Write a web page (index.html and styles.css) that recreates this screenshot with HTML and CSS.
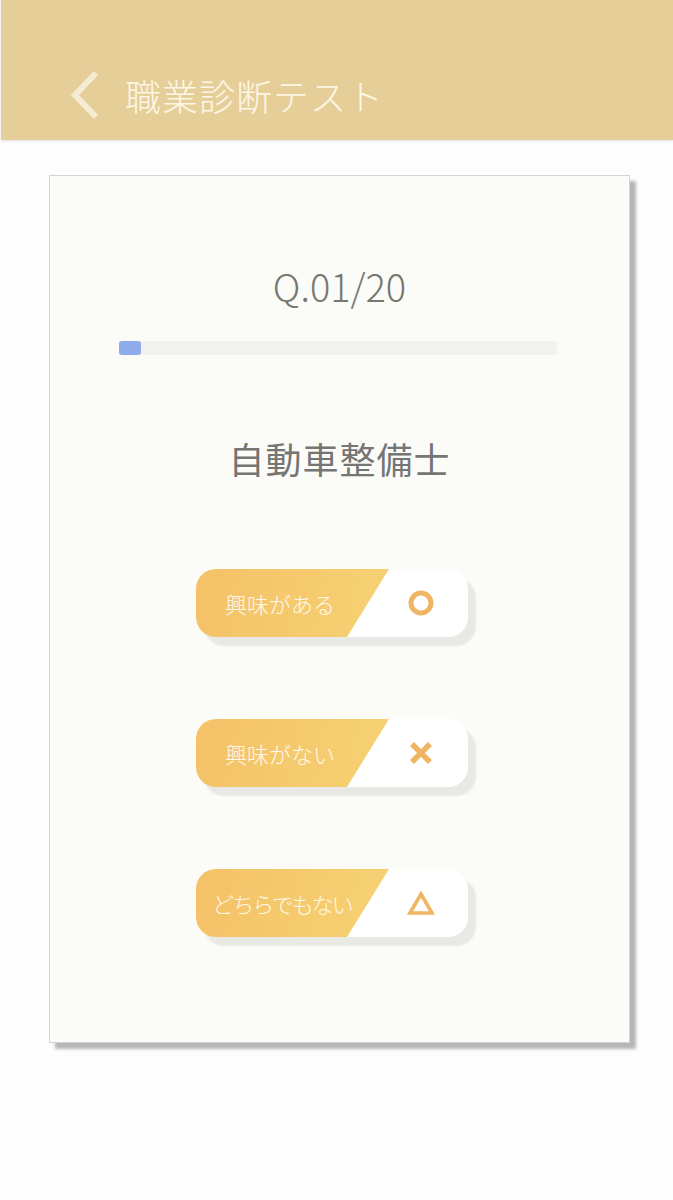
FILE: index.html
```
<!DOCTYPE html>
<html lang="ja">
<head>
<meta charset="utf-8">
<link rel="stylesheet" href="styles.css">
</head>
<body>
<header class="topbar">
  <svg class="back" width="34" height="50" viewBox="0 0 34 50"><path d="M28 3 L7 25 L28 47" fill="none" stroke="#f6ebd3" stroke-width="6"/></svg>
  <h1 class="title">職業診断テスト</h1>
</header>
<main class="card">
  <div class="qnum">Q.01/20</div>
  <div class="progress"><div class="fill" style="width:5%"></div></div>
  <h2 class="job">自動車整備士</h2>
  <div class="choices">
    <button class="choice">
      <span class="label">興味がある</span>
      <span class="icon"><svg width="28" height="28" viewBox="0 0 28 28"><circle cx="14" cy="14" r="10" fill="none" stroke="#f0b562" stroke-width="5"/></svg></span>
    </button>
    <button class="choice">
      <span class="label">興味がない</span>
      <span class="icon"><svg width="26" height="26" viewBox="0 0 26 26"><path d="M4 4 L22 22 M22 4 L4 22" fill="none" stroke="#f0b562" stroke-width="5.5"/></svg></span>
    </button>
    <button class="choice">
      <span class="label label-long">どちらでもない</span>
      <span class="icon"><svg width="28" height="26" viewBox="0 0 28 26"><path d="M14 4 L25 23 L3 23 Z" fill="none" stroke="#f0b562" stroke-width="3.6" stroke-linejoin="miter"/></svg></span>
    </button>
  </div>
</main>
</body>
</html>
```
FILE: styles.css
```
* { box-sizing: border-box; }
html, body { margin: 0; padding: 0; }
body {
  background: #fdfdfd;
  font-family: "Noto Sans CJK JP", "Noto Sans", sans-serif;
  width: 673px;
  height: 1200px;
  overflow: hidden;
}
.topbar {
  height: 140px;
  margin-left: 1px;
  background: #e5ce98;
  box-shadow: 0 1px 2px rgba(0,0,0,0.12);
  display: flex;
  align-items: center;
  padding: 50px 0 0 67px;
}
.back { display: block; flex: none; }
.title {
  margin: 0 0 0 23px;
  font-size: 36px;
  font-weight: 300;
  color: #fdf6e6;
  letter-spacing: 1px;
  line-height: 1;
}
.card {
  margin: 35px 0 0 49px;
  width: 581px;
  height: 868px;
  background: #fbfcf8;
  border: 1px solid #d4d4d0;
  box-shadow: 6px 6px 3px rgba(0,0,0,0.28);
  display: flex;
  flex-direction: column;
  align-items: center;
  padding-top: 84px;
}
.qnum {
  font-size: 38px;
  font-weight: 300;
  color: #78786f;
  line-height: 52px;
}
.progress {
  margin-top: 29px;
  width: 438px;
  height: 14px;
  background: #f2f3ef;
  border-radius: 2px;
  align-self: flex-start;
  margin-left: 69px;
}
.fill {
  height: 100%;
  background: #8eabeb;
  border-radius: 3px;
}
.job {
  margin: 78px 0 0 0;
  font-size: 36px;
  font-weight: 400;
  color: #757574;
  line-height: 50px;
  letter-spacing: 1px;
}
.choices {
  margin-top: 86px;
  display: flex;
  flex-direction: column;
  gap: 82px;
  align-self: flex-start;
  margin-left: 146px;
}
.choice {
  width: 272px;
  height: 68px;
  border: none;
  padding: 0;
  border-radius: 20px;
  overflow: hidden;
  background: #ffffff;
  box-shadow: 8px 9px 2px #e8e9e4;
  display: flex;
  align-items: stretch;
  font-family: inherit;
  cursor: pointer;
}
.label {
  width: 193px;
  flex: none;
  background: linear-gradient(100deg, #f4c167 0%, #f6d273 100%);
  clip-path: polygon(0 0, 100% 0, 151px 100%, 0 100%);
  display: flex;
  align-items: center;
  justify-content: center;
  padding-right: 25px;
  color: #fff8ea;
  font-size: 22px;
  font-weight: 300;
  white-space: nowrap;
}
.label-long {
  letter-spacing: -2px;
  padding-right: 21px;
}
.icon {
  flex: 1;
  display: flex;
  align-items: center;
  justify-content: center;
  padding-right: 16px;
}
.icon svg { display: block; }
```
